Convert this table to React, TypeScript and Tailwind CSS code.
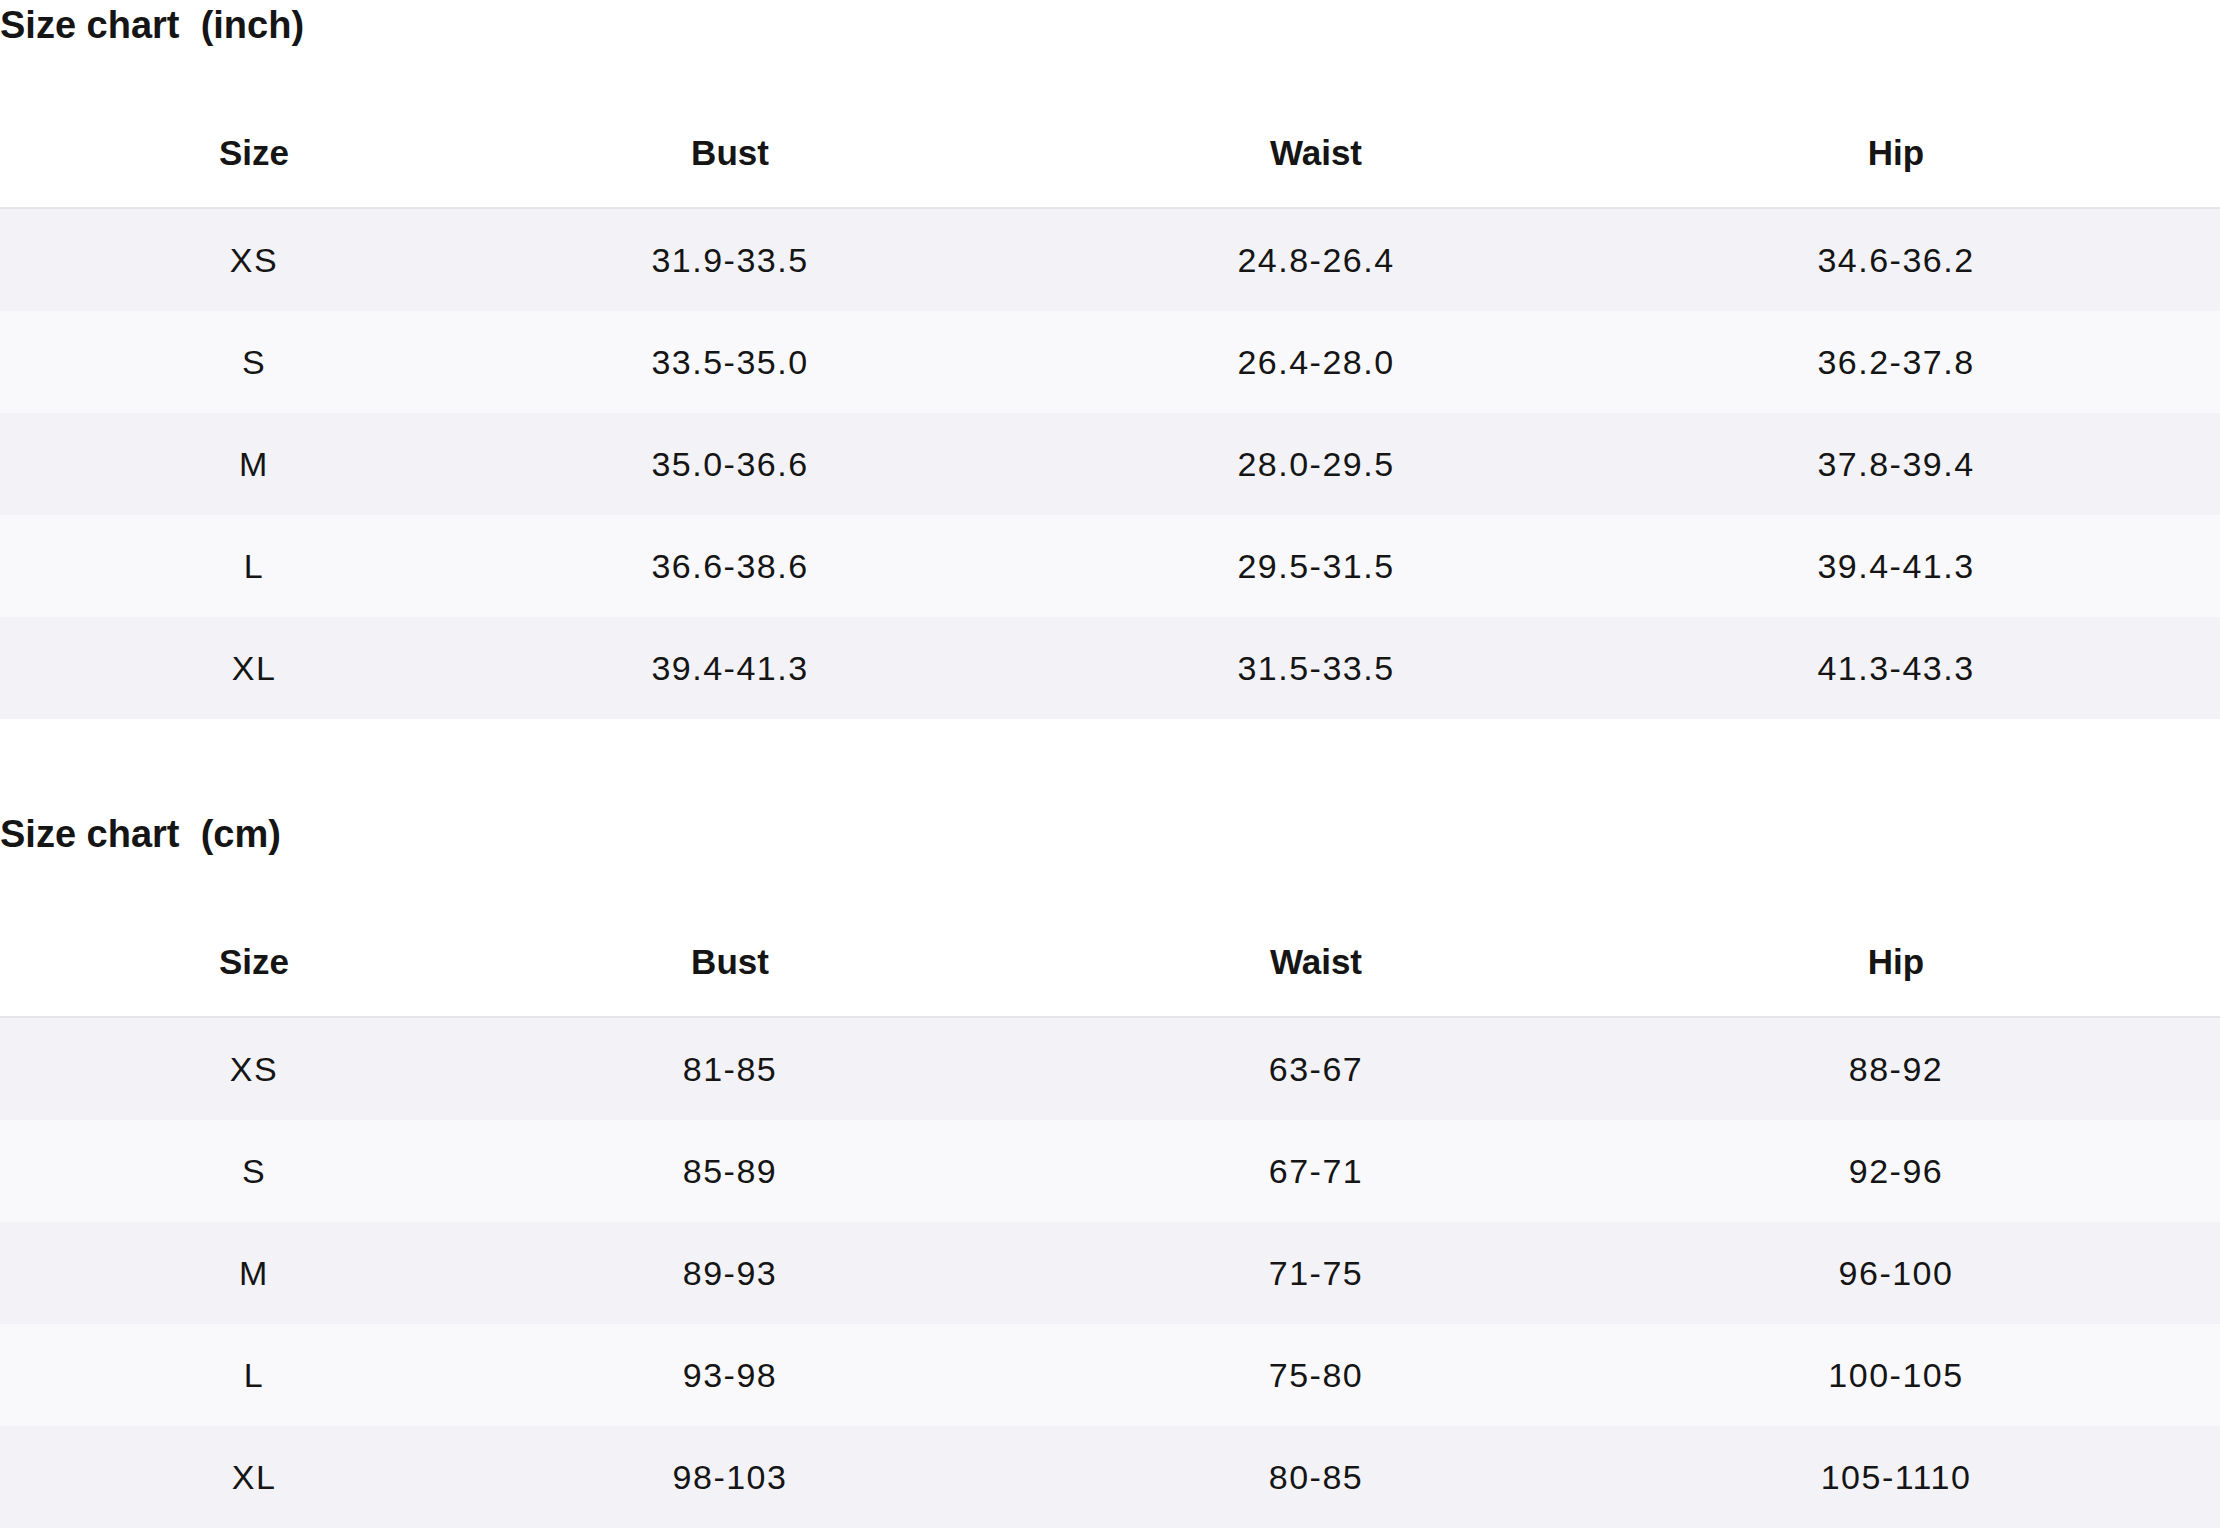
const inchRows = [
  ["XS", "31.9-33.5", "24.8-26.4", "34.6-36.2"],
  ["S", "33.5-35.0", "26.4-28.0", "36.2-37.8"],
  ["M", "35.0-36.6", "28.0-29.5", "37.8-39.4"],
  ["L", "36.6-38.6", "29.5-31.5", "39.4-41.3"],
  ["XL", "39.4-41.3", "31.5-33.5", "41.3-43.3"],
]

const cmRows = [
  ["XS", "81-85", "63-67", "88-92"],
  ["S", "85-89", "67-71", "92-96"],
  ["M", "89-93", "71-75", "96-100"],
  ["L", "93-98", "75-80", "100-105"],
  ["XL", "98-103", "80-85", "105-1110"],
]

const headers = ["Size", "Bust", "Waist", "Hip"]

function SizeTable({ title, rows }: { title: string; rows: string[][] }) {
  return (
    <section>
      <h2 className="h-[50px] whitespace-pre text-[38px] font-bold leading-[50px] text-[#151515]">{title}</h2>
      <div className="mt-[49px] grid h-[110px] grid-cols-[508px_444px_728px_432px] items-center border-b-2 border-[#e5e5ea] text-[35px] font-bold text-[#151515]">
        {headers.map((h) => (
          <div key={h} className="text-center">{h}</div>
        ))}
      </div>
      {rows.map((row, i) => (
        <div
          key={row[0]}
          className={`grid h-[102px] grid-cols-[508px_444px_728px_432px] items-center text-[34px] tracking-[1.5px] text-[#151515] ${
            i % 2 === 0 ? "bg-[#f3f3f7]" : "bg-[#f9f9fb]"
          }`}
        >
          {row.map((cell, j) => (
            <div key={j} className="text-center">{cell}</div>
          ))}
        </div>
      ))}
    </section>
  )
}

export default function App() {
  return (
    <div className="h-[1530px] w-[2220px] overflow-hidden bg-white font-['Liberation_Sans',Arial,sans-serif]">
      <SizeTable title="Size chart  (inch)" rows={inchRows} />
      <div className="h-[90px]" />
      <SizeTable title="Size chart  (cm)" rows={cmRows} />
    </div>
  )
}
